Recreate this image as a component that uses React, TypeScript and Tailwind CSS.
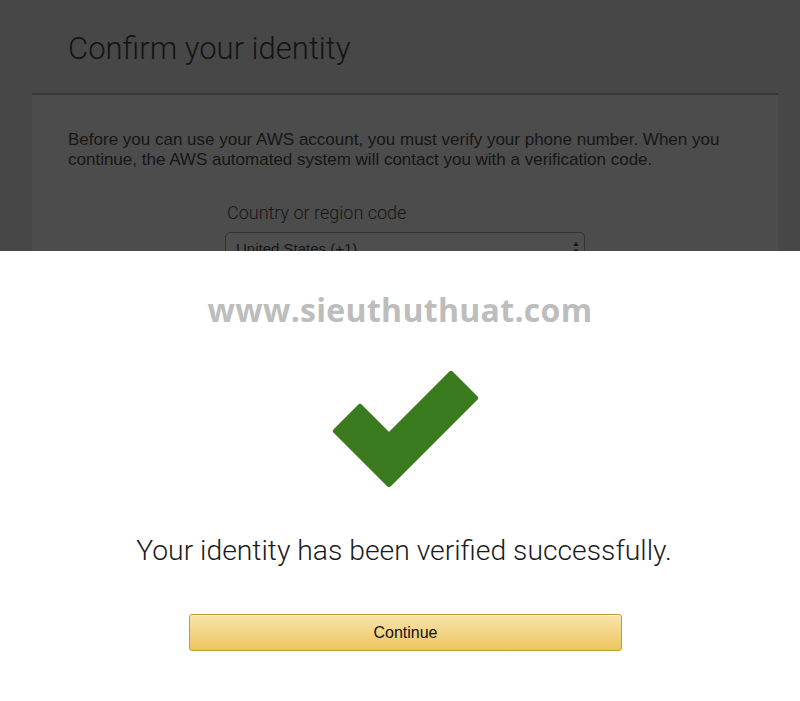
import React from 'react';

const CheckMark = () => (
  <svg width="160" height="130" viewBox="320 362 160 130" className="block">
    <polygon
      points="389,435 360,406 336,430 389,483 475,397 451,373"
      fill="#3a7b1f"
      stroke="#3a7b1f"
      strokeWidth="6"
      strokeLinejoin="round"
    />
  </svg>
);

export default function App() {
  return (
    <div className="w-[800px] h-[701px] overflow-hidden bg-white font-['Liberation_Sans',Arial,sans-serif]">
      {/* dimmed page behind the dialog */}
      <div className="h-[251px] overflow-hidden bg-[#474747]">
        <div className="h-[93px] pl-[68px] pt-[30px]">
          <h1 className="text-[31px] leading-[38px] font-light text-[#141414] font-['Roboto',sans-serif]">Confirm your identity</h1>
        </div>
        <div className="ml-[32px] mr-[22px] border-t-[2px] border-[#383838] bg-[#4c4c4c] h-[200px] px-[36px] pt-[35px]">
          <p className="text-[17px] leading-[20px] text-[#161616]">
            Before you can use your AWS account, you must verify your phone number. When you continue, the AWS automated system will contact you with a verification code.
          </p>
          <div className="ml-[157px] mt-[32px] w-[360px]">
            <div className="text-[18px] leading-[22px] font-light text-[#161616] font-['Roboto',sans-serif] pl-[2px]">Country or region code</div>
            <div className="mt-[8px] h-[34px] rounded-[5px] border border-[#333] bg-[#4e4e4e] flex items-start justify-between pl-[10px] pr-[4px] pt-[7px]">
              <span className="text-[15px] leading-[18px] text-[#161616]">United States (+1)</span>
              <span className="flex flex-col text-[8px] leading-[8px] text-[#161616]">
                <span>▲</span>
                <span>▼</span>
              </span>
            </div>
          </div>
        </div>
      </div>

      {/* success dialog */}
      <div className="h-[450px] flex flex-col items-center">
        <div className="mt-[38px] text-[32px] leading-[42px] font-bold text-[#bdbdbd] tracking-[0.3px] font-['Open_Sans',sans-serif]">www.sieuthuthuat.com</div>
        <div className="mt-[32px]">
          <CheckMark />
        </div>
        <div className="mt-[41px] ml-[8px] text-[28.3px] leading-[34px] font-light text-[#1a1a1a] font-['Roboto',sans-serif]">
          Your identity has been verified successfully.
        </div>
        <button className="mt-[46px] ml-[11px] w-[433px] h-[37px] rounded-[3px] border border-[#c49a36] bg-gradient-to-b from-[#f8e4ab] to-[#eec55c] text-[16px] text-[#111] shadow-[inset_0_1px_0_rgba(255,255,255,0.5)]">
          Continue
        </button>
      </div>
    </div>
  );
}
